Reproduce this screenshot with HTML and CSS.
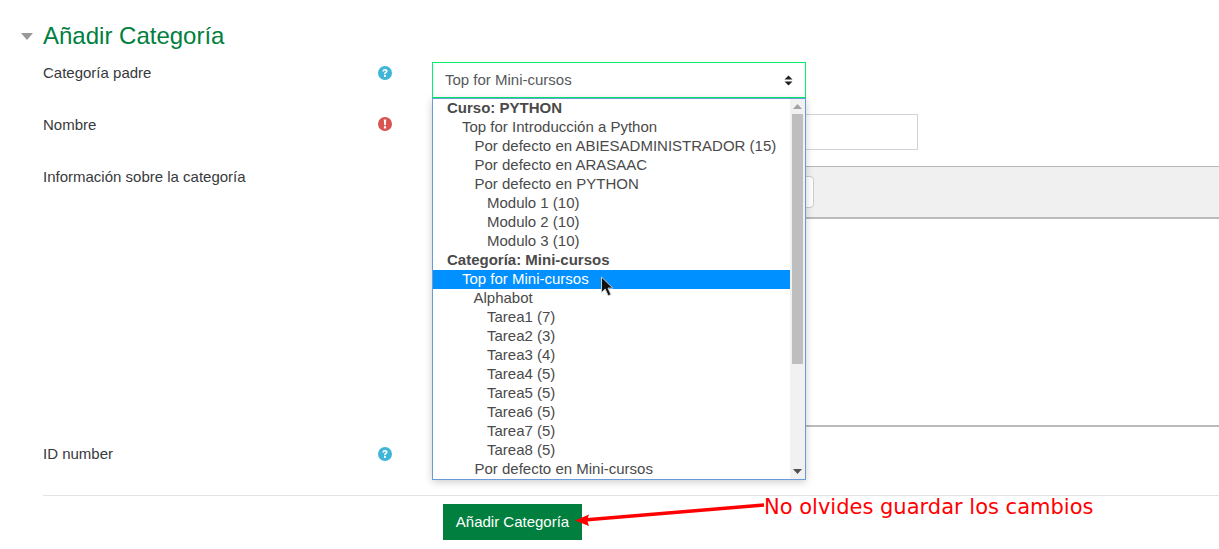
FILE: index.html
```html
<!DOCTYPE html>
<html lang="es">
<head>
  <meta charset="utf-8">
  <meta name="viewport" content="width=device-width, initial-scale=1.0">
  <link rel="stylesheet" href="styles.css">
  <title>Añadir Categoría</title>
</head>
<body>
  <main class="page">
    <h2 class="section-title">
      <svg class="caret" width="12" height="7" viewBox="0 0 12 7"><path d="M0 0h12L6 7z" fill="#999"/></svg>
      Añadir Categoría
    </h2>

    <form class="form">
      <div class="row">
        <label class="row-label">Categoría padre</label>
        <span class="row-icon">
          <svg width="14" height="14" viewBox="0 0 14 14"><circle cx="7" cy="7" r="7" fill="#3fb5d8"/><path d="M4.4 5.4C4.5 3.8 5.6 3 7 3c1.5 0 2.6.9 2.6 2.1 0 1-.6 1.5-1.2 1.9-.6.4-.7.6-.7 1.2H6.1c0-1 .2-1.6 1-2.1.5-.3.7-.5.7-.9 0-.4-.4-.7-.9-.7-.6 0-.9.3-1 .9zM6 9.1h1.8v1.8H6z" fill="#fff"/></svg>
        </span>
        <div class="row-control">
          <div class="select-box">
            <span class="select-value">Top for Mini-cursos</span>
            <svg width="9" height="11" viewBox="0 0 9 11"><path d="M0.5 4.5h8L4.5 0.5zM0.5 6.5h8L4.5 10.5z" fill="#222"/></svg>
          </div>
        </div>
      </div>

      <div class="row">
        <label class="row-label">Nombre</label>
        <span class="row-icon">
          <svg class="icon-error" width="14" height="14" viewBox="0 0 14 14"><circle cx="7" cy="7" r="7" fill="#d9534f"/><path d="M5.8 2.6h2.4l-.4 5.6H6.2zM5.9 9.2h2.2v2.2H5.9z" fill="#fff"/></svg>
        </span>
        <div class="row-control">
          <div class="text-input"></div>
        </div>
      </div>

      <div class="row row-wide">
        <label class="row-label">Información sobre la categoría</label>
        <span class="row-icon"></span>
        <div class="row-control">
          <div class="editor">
            <div class="editor-toolbar"><span class="toolbar-btn"></span></div>
            <div class="editor-body"></div>
          </div>
        </div>
      </div>

      <div class="row">
        <label class="row-label">ID number</label>
        <span class="row-icon">
          <svg width="14" height="14" viewBox="0 0 14 14"><circle cx="7" cy="7" r="7" fill="#3fb5d8"/><path d="M4.4 5.4C4.5 3.8 5.6 3 7 3c1.5 0 2.6.9 2.6 2.1 0 1-.6 1.5-1.2 1.9-.6.4-.7.6-.7 1.2H6.1c0-1 .2-1.6 1-2.1.5-.3.7-.5.7-.9 0-.4-.4-.7-.9-.7-.6 0-.9.3-1 .9zM6 9.1h1.8v1.8H6z" fill="#fff"/></svg>
        </span>
        <div class="row-control"></div>
      </div>

      <div class="actions">
        <button type="button" class="btn-primary">Añadir Categoría</button>
      </div>
    </form>
  </main>

  <!-- lista desplegada del select -->
  <div class="dropdown">
    <ul class="dropdown-list">
      <li class="opt-group">Curso: PYTHON</li>
      <li class="lvl-1">Top for Introducción a Python</li>
      <li class="lvl-2">Por defecto en ABIESADMINISTRADOR (15)</li>
      <li class="lvl-2">Por defecto en ARASAAC</li>
      <li class="lvl-2">Por defecto en PYTHON</li>
      <li class="lvl-3">Modulo 1 (10)</li>
      <li class="lvl-3">Modulo 2 (10)</li>
      <li class="lvl-3">Modulo 3 (10)</li>
      <li class="opt-group">Categoría: Mini-cursos</li>
      <li class="lvl-1 selected">Top for Mini-cursos</li>
      <li class="lvl-2b">Alphabot</li>
      <li class="lvl-3">Tarea1 (7)</li>
      <li class="lvl-3">Tarea2 (3)</li>
      <li class="lvl-3">Tarea3 (4)</li>
      <li class="lvl-3">Tarea4 (5)</li>
      <li class="lvl-3">Tarea5 (5)</li>
      <li class="lvl-3">Tarea6 (5)</li>
      <li class="lvl-3">Tarea7 (5)</li>
      <li class="lvl-3">Tarea8 (5)</li>
      <li class="lvl-2">Por defecto en Mini-cursos</li>
    </ul>
    <div class="scrollbar">
      <svg class="scroll-arrow" width="9" height="5" viewBox="0 0 9 5"><path d="M0 5h9L4.5 0z" fill="#a3a3a3"/></svg>
      <div class="scroll-track"><div class="scroll-thumb"></div></div>
      <svg class="scroll-arrow" width="9" height="5" viewBox="0 0 9 5"><path d="M0 0h9L4.5 5z" fill="#505050"/></svg>
    </div>
  </div>

  <svg class="cursor" width="15" height="22" viewBox="0 0 15 22">
    <path d="M1.5 1v15.5l3.7-3.4 3 6.6 2.7-1.2-2.9-6.4h4.8z" fill="#111" stroke="#ccc" stroke-width="1"/>
  </svg>

  <svg class="note-arrow" width="200" height="30" viewBox="0 0 200 30">
    <path d="M194 5L14 20" stroke="#f00" stroke-width="3.5" fill="none"/>
    <path d="M5 20.5l14-6-2 5.5 2 6z" fill="#f00"/>
  </svg>
  <span class="note-text">No olvides guardar los cambios</span>
</body>
</html>
```

FILE: styles.css
```css
body {
  margin: 0;
  font-family: "Liberation Sans", Arial, sans-serif;
  font-size: 15px;
  color: #373a3c;
  background-color: #fff;
  overflow: hidden;
}

.page {
  padding: 20px 0 0 21px;
}

.section-title {
  display: flex;
  align-items: center;
  gap: 10px;
  margin: 0;
  height: 32px;
  font-size: 24px;
  font-weight: normal;
  color: #007f3e;
}

.form {
  margin: 10px 0 0 22px;
}

.row {
  display: flex;
  margin-bottom: 16px;
}

.row-label {
  width: 335px;
  padding-top: 2px;
  line-height: 18px;
}

.row-icon {
  width: 54px;
  padding-top: 4px;
}

.icon-error {
  display: block;
  margin-top: -1px;
}

.row-control {
  flex: 1;
  min-height: 36px;
}

.select-box {
  display: flex;
  align-items: center;
  justify-content: space-between;
  box-sizing: border-box;
  width: 374px;
  height: 36px;
  padding: 0 12px;
  border: 1px solid #00f070;
}

.select-value {
  padding-bottom: 2px;
  color: #55595c;
}

.text-input {
  box-sizing: border-box;
  width: 486px;
  height: 36px;
  border: 1px solid #ced4da;
}

.editor-toolbar {
  box-sizing: border-box;
  height: 53px;
  padding: 9px 0 0 340px;
  background-color: #f0f0f0;
  border-top: 1px solid #b8b8b8;
  border-bottom: 2px solid #bbb;
}

.toolbar-btn {
  display: block;
  box-sizing: border-box;
  width: 42px;
  height: 32px;
  background-color: #fff;
  border: 1px solid #ccc;
  border-radius: 4px;
}

.editor-body {
  height: 206px;
  border-bottom: 2px solid #bbb;
}

.actions {
  margin-top: 5px;
  padding: 8px 0 0 400px;
  border-top: 1px solid #e3e3e3;
}

.btn-primary {
  display: block;
  width: 139px;
  height: 36px;
  padding: 0 0 2px;
  border: 0;
  font-family: inherit;
  font-size: 15px;
  color: #fff;
  background-color: #007f3e;
}

/* lista desplegada */
.dropdown {
  position: absolute;
  left: 432px;
  top: 98px;
  display: flex;
  box-sizing: border-box;
  width: 374px;
  height: 382px;
  background-color: #fff;
  border: 1px solid #6a9ad8;
  box-shadow: 0 2px 8px rgba(0, 0, 0, 0.2);
}

.dropdown-list {
  flex: 1;
  margin: 0;
  padding: 0;
  list-style: none;
  color: #4a4a4a;
}

.dropdown-list li {
  height: 19px;
  line-height: 17px;
  white-space: nowrap;
}

.opt-group {
  padding-left: 14px;
  font-weight: bold;
}

.lvl-1 {
  padding-left: 29px;
}

.lvl-2 {
  padding-left: 41.5px;
}

.lvl-2b {
  padding-left: 40.5px;
}

.lvl-3 {
  padding-left: 54px;
}

.dropdown-list .selected {
  color: #fff;
  background-color: #0090ff;
}

.scrollbar {
  display: flex;
  flex-direction: column;
  align-items: center;
  width: 15px;
  background-color: #f1f1f1;
}

.scroll-arrow {
  flex: none;
  margin: 5px 0;
}

.scroll-track {
  flex: 1;
  align-self: stretch;
}

.scroll-thumb {
  width: 11px;
  height: 250px;
  margin-left: 2px;
  background-color: #bebebe;
}

.cursor {
  position: absolute;
  left: 600px;
  top: 276px;
}

.note-arrow {
  position: absolute;
  left: 570px;
  top: 500px;
}

.note-text {
  position: absolute;
  left: 764px;
  top: 495px;
  font-family: "DejaVu Sans", sans-serif;
  font-size: 21px;
  color: #f00;
}
```
